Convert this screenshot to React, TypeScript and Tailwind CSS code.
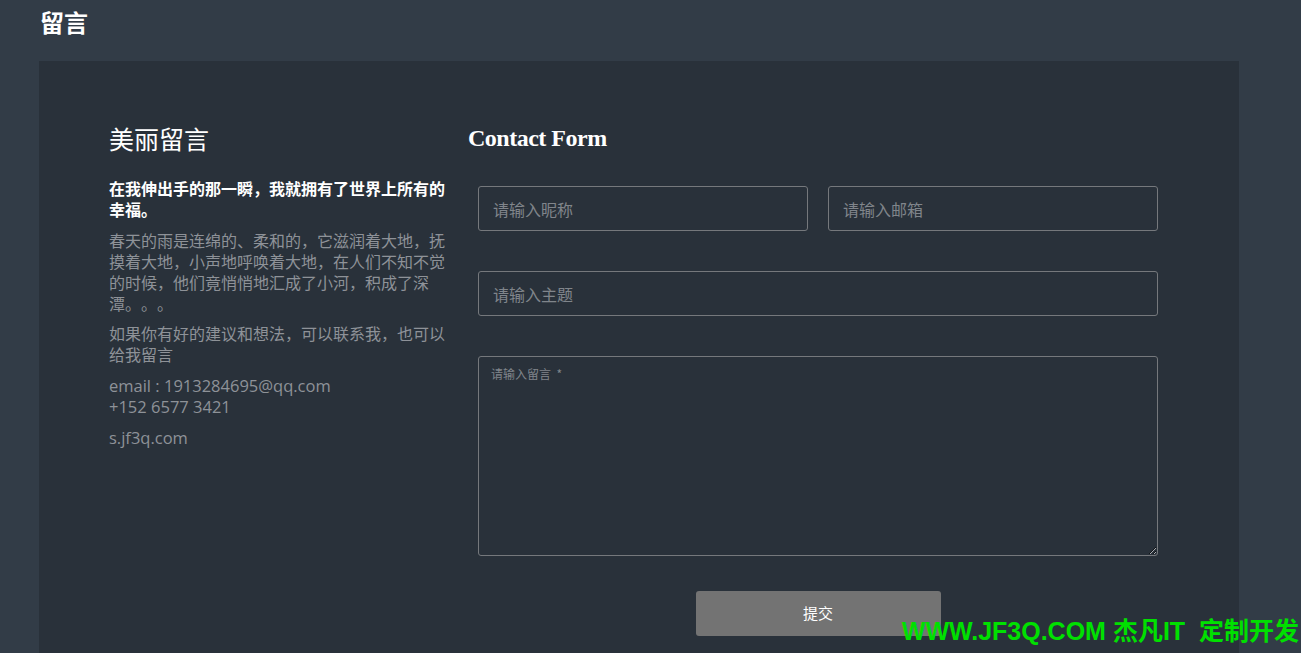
import React from 'react'

const cjk = '"Noto Sans CJK SC", "Noto Sans", sans-serif'

export default function App() {
  return (
    <div className="relative min-h-screen bg-[#323c47] px-[39px] overflow-hidden [text-spacing-trim:space-all]" style={{ fontFamily: cjk }}>
      {/* Header */}
      <div className="h-[61px] flex items-center">
        <h1 className="pl-px text-[24px] font-bold text-white leading-none -mt-[18px]">留言</h1>
      </div>

      {/* Panel */}
      <div className="w-[1200px] bg-[#29313a] pt-[62px] pb-[60px]">
        <div className="flex">
          {/* Left column */}
          <div className="ml-[70px] w-[340px]">
            <h2 className="text-[25px] leading-[30px] text-white">美丽留言</h2>
            <p className="mt-[25px] text-[16px] leading-[21px] font-semibold text-white">
              在我伸出手的那一瞬，我就拥有了世界上所有的幸福。
            </p>
            <p className="mt-[10px] text-[16px] leading-[21px] text-[#8e9298]">
              春天的雨是连绵的、柔和的，它滋润着大地，抚摸着大地，小声地呼唤着大地，在人们不知不觉的时候，他们竟悄悄地汇成了小河，积成了深潭。。。
            </p>
            <p className="mt-[9px] text-[16px] leading-[21px] text-[#8e9298]">
              如果你有好的建议和想法，可以联系我，也可以给我留言
            </p>
            <p className="mt-[10px] text-[16.5px] leading-[21px] text-[#8e9298]" style={{ fontFamily: '"Open Sans", sans-serif' }}>
              email : 1913284695@qq.com
              <br />
              +152 6577 3421
            </p>
            <p className="mt-[10px] text-[16.5px] leading-[21px] text-[#8e9298]" style={{ fontFamily: '"Open Sans", sans-serif' }}>
              s.jf3q.com
            </p>
          </div>

          {/* Right column */}
          <div className="ml-[19px] w-[690px]">
            <h2 className="text-[24px] leading-[30px] font-bold text-white tracking-[-0.5px]" style={{ fontFamily: '"Liberation Serif", serif' }}>
              Contact Form
            </h2>
            <div className="pl-[10px] mt-[33px]">
              <div className="grid grid-cols-2 gap-[20px]">
                <input
                  placeholder="请输入昵称"
                  className="h-[45px] rounded-[3px] border border-[#75787c] bg-transparent px-[14px] text-[16px] text-white placeholder:text-[#80858b] outline-none"
                />
                <input
                  placeholder="请输入邮箱"
                  className="h-[45px] rounded-[3px] border border-[#75787c] bg-transparent px-[14px] text-[16px] text-white placeholder:text-[#80858b] outline-none"
                />
              </div>
              <input
                placeholder="请输入主题"
                className="mt-[40px] block w-full h-[45px] rounded-[3px] border border-[#75787c] bg-transparent px-[14px] text-[16px] text-white placeholder:text-[#80858b] outline-none"
              />
              <textarea
                placeholder="请输入留言  *"
                className="mt-[40px] block w-full h-[200px] rounded-[3px] border border-[#75787c] bg-transparent px-[12px] py-[8px] text-[12px] text-white placeholder:text-[#80858b] outline-none"
              />
              <div className="mt-[35px] flex justify-center">
                <button className="w-[245px] h-[45px] rounded-[3px] bg-[#737373] text-[15px] text-white">提交</button>
              </div>
            </div>
          </div>
        </div>
      </div>

      {/* Overlay badge */}
      <div
        className="absolute right-[2px] top-[619px] text-[25px] leading-none font-bold text-[#00e000] whitespace-nowrap"
        style={{ fontFamily: '"Liberation Sans", "Noto Sans CJK SC", sans-serif' }}
      >
        WWW.JF3Q.COM 杰凡IT&nbsp; 定制开发
      </div>
    </div>
  )
}
